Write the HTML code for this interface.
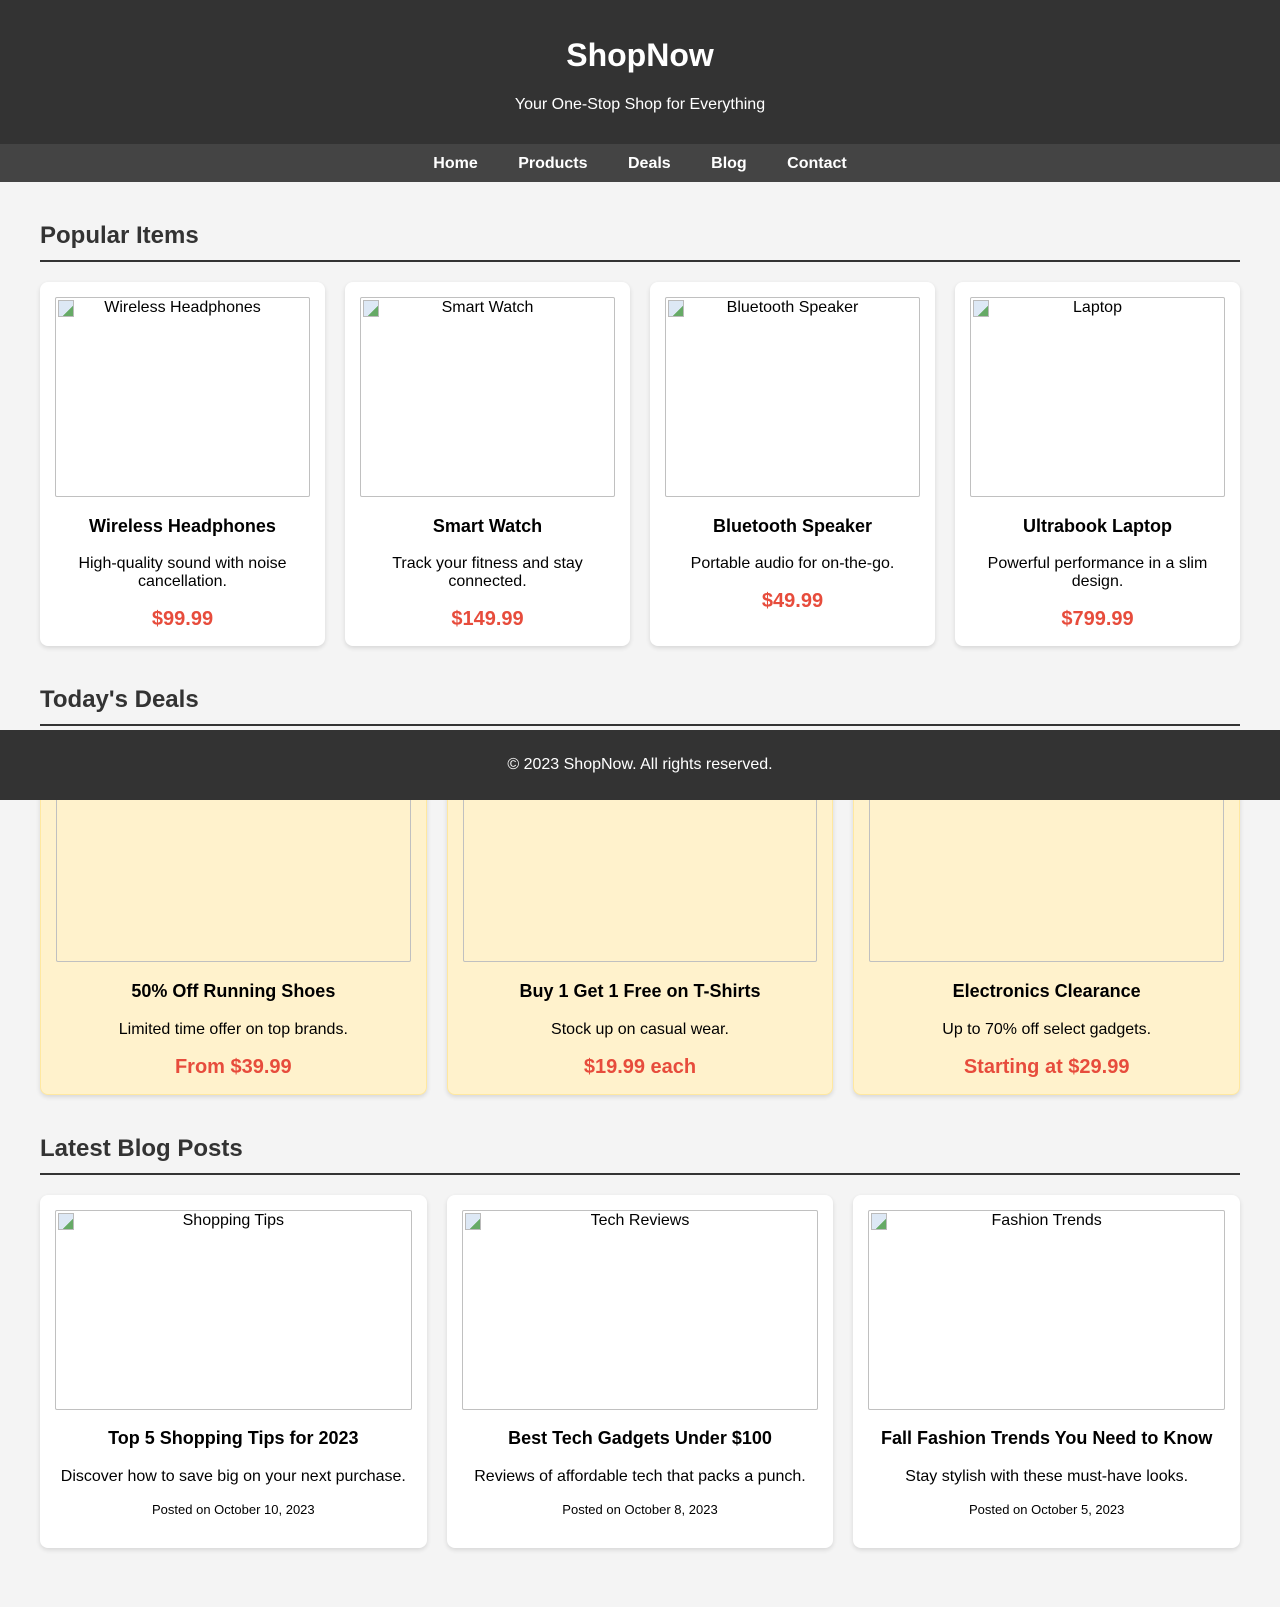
<!DOCTYPE html>
<html><head><meta charset="utf-8"><style>
*{box-sizing:border-box}
body{margin:0;background:#f4f4f4;font-family:"Liberation Sans",Arial,sans-serif;color:#000;height:1607px;position:relative}
header{background:#333;color:#fff;text-align:center;height:144px;padding-top:1px}
header h1{font-size:32px;margin:36px 0 0;line-height:37px}
header p{margin:22px 0 0;font-size:16px}
nav{background:#444;height:38px;text-align:center;line-height:39px}
nav a{color:#fff;font-weight:bold;text-decoration:none;margin:0 18px;font-size:16px}
main{padding:0 40px}
h2{font-size:24px;color:#333;margin:0 0 20px;padding-bottom:10px;border-bottom:2px solid #333;line-height:28px}
section{padding-top:40px}
.grid{display:grid;gap:20px}
.g4{grid-template-columns:repeat(4,1fr)}
.g3{grid-template-columns:repeat(3,1fr)}
.card{background:#fff;border-radius:8px;padding:15px;text-align:center;box-shadow:0 2px 5px rgba(0,0,0,.12)}
.deal{background:#fff2cc;border:1px solid #ffe8a0}
.img{height:200px;border:1px solid #c0c0c0;border-radius:2px;font-size:16px;text-align:center;padding-top:1px;position:relative}
.img:before{content:"";position:absolute;left:2px;top:2px;width:14px;height:15px;background:linear-gradient(135deg,#dde8f5 65%,#6a6 65%);border:1px solid #bbb}
.card h3{font-size:18px;margin:18.7px 0}
.card p{margin:10px 0;font-size:16px}
.card p.price{color:#e74c3c;font-weight:bold;font-size:20px;margin:17px 0 0}
.card p.date{font-size:13px;margin:16px 0 16px}
footer{position:absolute;left:0;right:0;top:730px;height:70px;background:#333;color:#fff;text-align:center;line-height:70px;font-size:16px}
</style></head><body>
<header><h1>ShopNow</h1><p>Your One-Stop Shop for Everything</p></header>
<nav><a>Home</a> <a>Products</a> <a>Deals</a> <a>Blog</a> <a>Contact</a></nav>
<main>
<section><h2>Popular Items</h2>
<div class="grid g4">
<div class="card"><div class="img">Wireless Headphones</div><h3>Wireless Headphones</h3><p>High-quality sound with noise cancellation.</p><p class="price">$99.99</p></div>
<div class="card"><div class="img">Smart Watch</div><h3>Smart Watch</h3><p>Track your fitness and stay connected.</p><p class="price">$149.99</p></div>
<div class="card"><div class="img">Bluetooth Speaker</div><h3>Bluetooth Speaker</h3><p>Portable audio for on-the-go.</p><p class="price">$49.99</p></div>
<div class="card"><div class="img">Laptop</div><h3>Ultrabook Laptop</h3><p>Powerful performance in a slim design.</p><p class="price">$799.99</p></div>
</div></section>
<section><h2>Today's Deals</h2>
<div class="grid g3">
<div class="card deal"><div class="img">Running Shoes</div><h3>50% Off Running Shoes</h3><p>Limited time offer on top brands.</p><p class="price">From $39.99</p></div>
<div class="card deal"><div class="img">T-Shirts</div><h3>Buy 1 Get 1 Free on T-Shirts</h3><p>Stock up on casual wear.</p><p class="price">$19.99 each</p></div>
<div class="card deal"><div class="img">Electronics</div><h3>Electronics Clearance</h3><p>Up to 70% off select gadgets.</p><p class="price">Starting at $29.99</p></div>
</div></section>
<section><h2>Latest Blog Posts</h2>
<div class="grid g3">
<div class="card"><div class="img">Shopping Tips</div><h3>Top 5 Shopping Tips for 2023</h3><p>Discover how to save big on your next purchase.</p><p class="date">Posted on October 10, 2023</p></div>
<div class="card"><div class="img">Tech Reviews</div><h3>Best Tech Gadgets Under $100</h3><p>Reviews of affordable tech that packs a punch.</p><p class="date">Posted on October 8, 2023</p></div>
<div class="card"><div class="img">Fashion Trends</div><h3>Fall Fashion Trends You Need to Know</h3><p>Stay stylish with these must-have looks.</p><p class="date">Posted on October 5, 2023</p></div>
</div></section>
</main>
<footer>© 2023 ShopNow. All rights reserved.</footer>
</body></html>
